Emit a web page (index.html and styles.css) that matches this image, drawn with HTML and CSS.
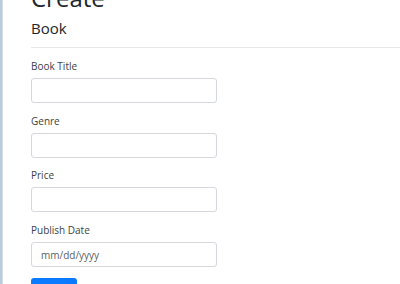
FILE: index.html
```html
<!DOCTYPE html>
<html lang="en">
<head>
  <meta charset="UTF-8">
  <meta name="viewport" content="width=device-width, initial-scale=1.0">
  <title>Create - Book</title>
  <link rel="stylesheet" href="styles.css">
</head>
<body>
  <div class="frame">
    <div class="edge"></div>

    <main class="content">
      <h1 class="page-title">Create</h1>
      <h4 class="page-subtitle">Book</h4>
      <hr class="divider">

      <form class="book-form">
        <div class="form-group">
          <label for="title">Book Title</label>
          <input type="text" id="title" name="title" class="form-control">
        </div>

        <div class="form-group">
          <label for="genre">Genre</label>
          <input type="text" id="genre" name="genre" class="form-control">
        </div>

        <div class="form-group">
          <label for="price">Price</label>
          <input type="text" id="price" name="price" class="form-control">
        </div>

        <div class="form-group">
          <label for="date">Publish Date</label>
          <input type="text" id="date" name="date" class="form-control" placeholder="mm/dd/yyyy">
        </div>

        <button type="submit" class="btn-primary">Create</button>
      </form>
    </main>
  </div>
</body>
</html>
```

FILE: styles.css
```css
html * {
  font-family: "Open Sans", "Noto Sans", sans-serif;
  color: #212529;
}

body {
  margin: 0;
  background: #fff;
  overflow: hidden;
}

.frame {
  display: flex;
  height: 284px;
  overflow: hidden;
}

.edge {
  width: 2px;
  flex-shrink: 0;
  background: #b4cde2;
  border-right: 1px solid #d9dde1;
}

.content {
  flex: 1;
  padding-left: 28px;
}

.page-title {
  font-size: 24px;
  font-weight: 400;
  line-height: 30px;
  margin: -17px 0 0 0;
}

.page-subtitle {
  font-size: 15px;
  font-weight: 400;
  line-height: 18px;
  margin: 6px 0 0 0;
}

.divider {
  border: 0;
  border-top: 1px solid #e6e8ea;
  margin: 10px 0 0 0;
}

.book-form {
  padding-top: 11px;
}

.form-group {
  display: flex;
  flex-direction: column;
  align-items: flex-start;
  gap: 4px;
  margin-bottom: 10.7px;
}

.form-group label {
  font-size: 10px;
  line-height: 15px;
  color: #3c3f42;
}

.form-control {
  box-sizing: border-box;
  width: 186px;
  height: 25px;
  margin: 0;
  padding: 0 9px;
  font-size: 10px;
  border: 1px solid #d4d8dc;
  border-radius: 3px;
  background: #fff;
}

.form-control::placeholder {
  color: #5a5f64;
}

.btn-primary {
  width: 46px;
  height: 25px;
  margin: 0;
  padding: 0;
  border: 0;
  border-radius: 3px;
  background: #0a7bff;
  color: #fff;
  font-size: 10px;
}
```
